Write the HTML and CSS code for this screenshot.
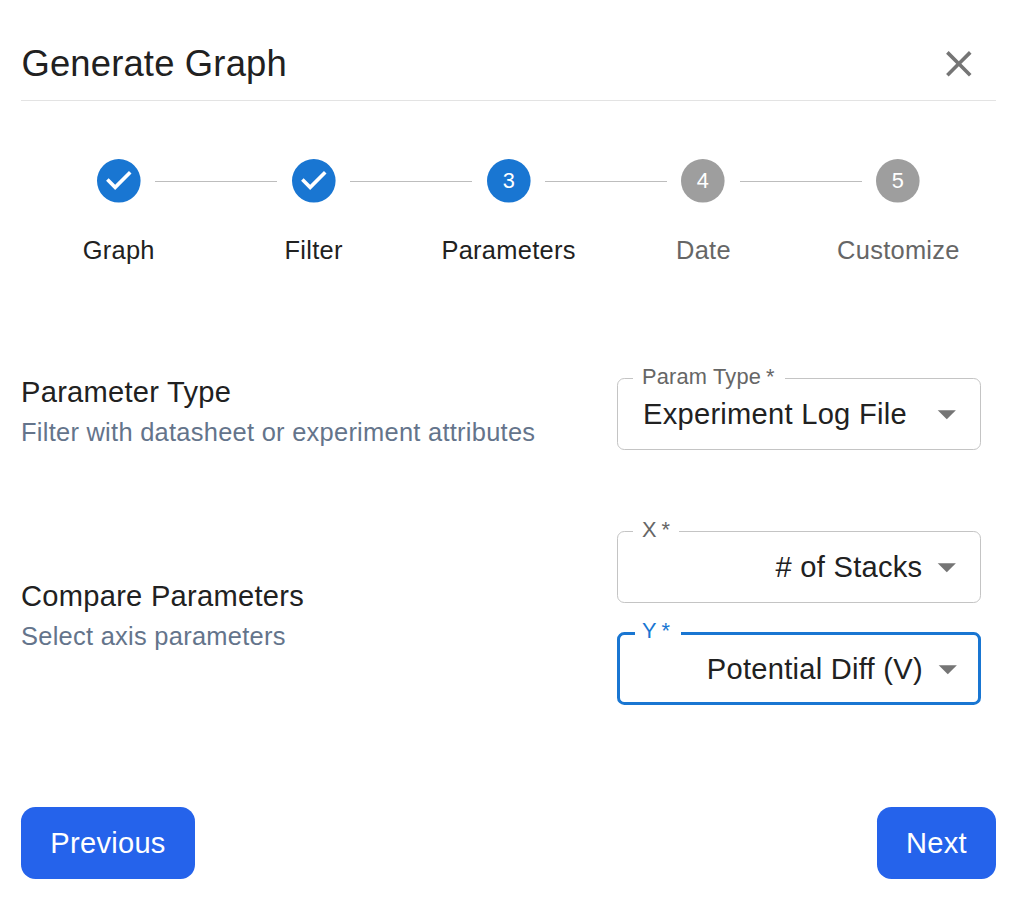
FILE: index.html
```html
<!DOCTYPE html>
<html lang="en">
<head>
<meta charset="utf-8">
<title>Generate Graph</title>
<link rel="stylesheet" href="styles.css">
</head>
<body>
<main class="dialog">
  <header class="header">
    <h1 class="title">Generate Graph</h1>
    <button class="close" aria-label="Close"><svg viewBox="0 0 24 24"><path d="M19 6.41 17.59 5 12 10.59 6.41 5 5 6.41 10.59 12 5 17.59 6.41 19 12 13.41 17.59 19 19 17.59 13.41 12z"/></svg></button>
  </header>

  <ol class="stepper">
    <li class="step done">
      <div class="track"><i></i><svg class="dot" viewBox="0 0 24 24"><path d="M12 0a12 12 0 1 0 0 24 12 12 0 0 0 0-24zm-2 17l-5-5 1.4-1.4 3.6 3.6 7.6-7.6L19 8l-9 9z"/></svg><i class="line"></i></div>
      <span class="name">Graph</span>
    </li>
    <li class="step done">
      <div class="track"><i class="line"></i><svg class="dot" viewBox="0 0 24 24"><path d="M12 0a12 12 0 1 0 0 24 12 12 0 0 0 0-24zm-2 17l-5-5 1.4-1.4 3.6 3.6 7.6-7.6L19 8l-9 9z"/></svg><i class="line"></i></div>
      <span class="name">Filter</span>
    </li>
    <li class="step active">
      <div class="track"><i class="line"></i><svg class="dot" viewBox="0 0 24 24"><circle cx="12" cy="12" r="12"/><text x="12" y="12">3</text></svg><i class="line"></i></div>
      <span class="name">Parameters</span>
    </li>
    <li class="step">
      <div class="track"><i class="line"></i><svg class="dot" viewBox="0 0 24 24"><circle cx="12" cy="12" r="12"/><text x="12" y="12">4</text></svg><i class="line"></i></div>
      <span class="name">Date</span>
    </li>
    <li class="step">
      <div class="track"><i class="line"></i><svg class="dot" viewBox="0 0 24 24"><circle cx="12" cy="12" r="12"/><text x="12" y="12">5</text></svg><i></i></div>
      <span class="name">Customize</span>
    </li>
  </ol>

  <section class="row">
    <div class="info">
      <h2 class="heading">Parameter Type</h2>
      <p class="hint">Filter with datasheet or experiment attributes</p>
    </div>
    <div class="fields">
      <div class="select">
        <span class="label wide">Param Type<span class="star"> *</span></span>
        <span class="value">Experiment Log File</span>
        <svg class="arrow" viewBox="0 0 24 24"><path d="M7 10l5 5 5-5z"/></svg>
      </div>
    </div>
  </section>

  <section class="row compare">
    <div class="info">
      <h2 class="heading">Compare Parameters</h2>
      <p class="hint">Select axis parameters</p>
    </div>
    <div class="fields">
      <div class="select axis">
        <span class="label">X<span class="star"> *</span></span>
        <span class="value"># of Stacks</span>
        <svg class="arrow" viewBox="0 0 24 24"><path d="M7 10l5 5 5-5z"/></svg>
      </div>
      <div class="select axis focused">
        <span class="label">Y<span class="star"> *</span></span>
        <span class="value">Potential Diff (V)</span>
        <svg class="arrow" viewBox="0 0 24 24"><path d="M7 10l5 5 5-5z"/></svg>
      </div>
    </div>
  </section>

  <footer class="actions">
    <button class="btn prev">Previous</button>
    <button class="btn next">Next</button>
  </footer>
</main>
</body>
</html>
```
FILE: styles.css
```css
* { box-sizing: border-box; }
body {
  margin: 0;
  background: #fff;
  color: #212121;
  font-family: "Liberation Sans", Arial, sans-serif;
}
h1, h2, p, ol { margin: 0; padding: 0; font-weight: 400; }
button { border: 0; font: inherit; }
.dialog { padding: 27px 28px 0 21px; }

.header {
  display: flex;
  align-items: center;
  justify-content: space-between;
  height: 74px;
  border-bottom: 1px solid #e3e3e3;
}
.title { padding-left: 0.4px; font-size: 36.4px; line-height: 58px; letter-spacing: 0.18px; }
.close { display: flex; padding: 0; margin-right: 15px; background: none; }
.close svg { width: 43.6px; height: 43.6px; fill: #757575; }

.stepper { display: flex; margin-top: 58px; list-style: none; width: 974.6px; }
.step { flex: 1; text-align: center; color: #666; }
.step.done, .step.active { color: #212121; }
.track { display: flex; align-items: center; justify-content: space-between; height: 43.6px; }
.track i { width: 61px; height: 1px; margin-top: 1px; }
.track .line { background: #bdbdbd; }
.dot { width: 43.6px; height: 43.6px; fill: #9e9e9e; overflow: visible; }
.done .dot, .active .dot { fill: #1976d2; }
.dot text {
  fill: #fff;
  font-size: 12px;
  text-anchor: middle;
  dominant-baseline: central;
}
.name {
  display: block;
  margin-top: 29px;
  padding-left: 0.5px;
  font-size: 25.45px;
  line-height: 36.4px;
  letter-spacing: 0.27px;
}

.row { display: flex; align-items: center; justify-content: space-between; margin-top: 102px; padding-right: 15px; }
.compare { margin-top: 72.6px; }
.info { padding-bottom: 8px; }
.heading { font-size: 29.1px; line-height: 44px; letter-spacing: 0.27px; }
.hint { font-size: 25.45px; line-height: 36.4px; letter-spacing: 0.27px; color: #64748b; }
.fields { display: grid; gap: 29px; width: 364px; }
.select {
  position: relative;
  display: flex;
  align-items: center;
  height: 72px;
  padding: 0 11px 0 25px;
  border: 1px solid #c4c4c4;
  border-radius: 7.3px;
}
.value { margin-right: 3px; font-size: 29.1px; line-height: 42px; letter-spacing: 0.27px; white-space: nowrap; }
.arrow { width: 43.6px; height: 43.6px; margin-left: auto; fill: #757575; flex: none; }
.axis .value { margin-left: auto; }
.axis .value + .arrow { margin-left: 0; }
.label {
  position: absolute;
  top: -15px;
  left: 15px;
  padding: 0 9px;
  background: #fff;
  color: #666;
  font-size: 21.8px;
  line-height: 26px;
  letter-spacing: 0.2px;
  white-space: nowrap;
}
.label.wide { padding-right: 10.5px; }
.star { margin-left: -1.5px; }
.focused { height: 73px; border: 3px solid #1976d2; padding: 0 8.5px 0 23px; }
.focused .label { top: -17px; padding: 0 11px 0 7px; color: #1976d2; }

.actions { display: flex; justify-content: space-between; margin-top: 102px; }
.btn {
  height: 72px;
  padding: 0;
  border-radius: 14.5px;
  background: #2563eb;
  color: #fff;
  font-size: 29.1px;
  letter-spacing: 0.27px;
}
.prev { width: 174px; }
.next { width: 119px; }
```
